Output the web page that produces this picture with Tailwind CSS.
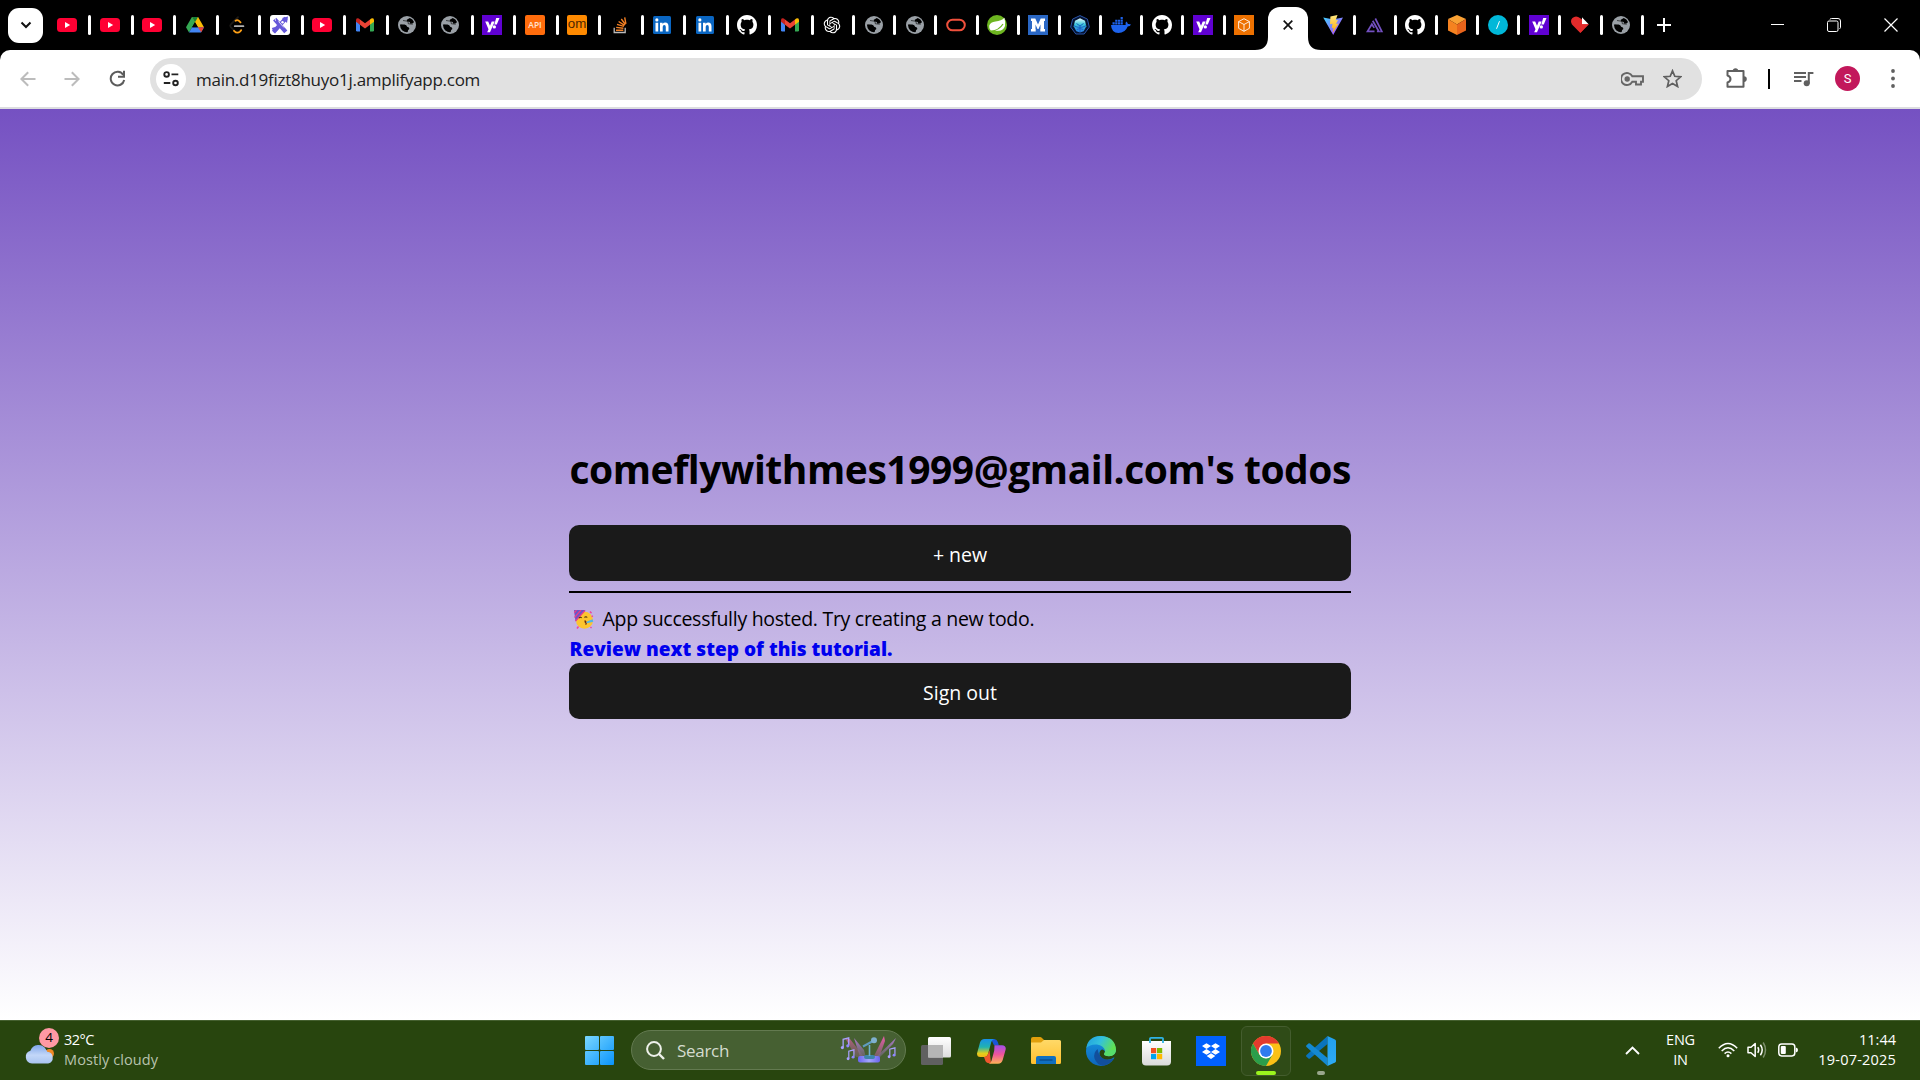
<!DOCTYPE html>
<html lang="en">
<head>
<meta charset="utf-8">
<title>Todos</title>
<script src="https://cdn.jsdelivr.net/npm/@tailwindcss/browser@4"></script>
</head>
<body class="flex h-[1080px] w-[1920px] flex-col overflow-hidden bg-black font-['Open_Sans','Noto_Sans',sans-serif] text-black">

<svg class="absolute size-0">
  <defs>
    <linearGradient id="viteA" x1="0" y1="0" x2="1" y2="1"><stop offset="0" stop-color="#41d1ff"/><stop offset="1" stop-color="#bd34fe"/></linearGradient>
    <linearGradient id="viteB" x1="0" y1="0" x2="0" y2="1"><stop offset="0" stop-color="#ffea83"/><stop offset="1" stop-color="#ffa800"/></linearGradient>
    <linearGradient id="winG" gradientUnits="userSpaceOnUse" x1="0" y1="0" x2="29" y2="29"><stop offset="0" stop-color="#7ad7ff"/><stop offset="1" stop-color="#0a94fb"/></linearGradient>
    <linearGradient id="cloudG" x1="0" y1="0" x2="0" y2="1"><stop offset="0" stop-color="#7fa6ea"/><stop offset=".55" stop-color="#c3d7f8"/><stop offset="1" stop-color="#a9c4f0"/></linearGradient>
    <linearGradient id="copA" x1="0" y1="0" x2="0" y2="1"><stop offset="0" stop-color="#1890e8"/><stop offset=".45" stop-color="#21b3b0"/><stop offset=".8" stop-color="#e3cf1b"/><stop offset="1" stop-color="#f4b31a"/></linearGradient>
    <linearGradient id="copB" x1="0" y1="0" x2="0" y2="1"><stop offset="0" stop-color="#a24fe8"/><stop offset=".5" stop-color="#f0559a"/><stop offset="1" stop-color="#ffb357"/></linearGradient>
    <linearGradient id="foldG" x1="0" y1="0" x2="0" y2="1"><stop offset="0" stop-color="#ffd968"/><stop offset="1" stop-color="#ffc02e"/></linearGradient>
    <linearGradient id="edgeA" x1="0" y1="0" x2="1" y2=".4"><stop offset="0" stop-color="#1f9de0"/><stop offset=".5" stop-color="#33c1dd"/><stop offset="1" stop-color="#62e24f"/></linearGradient>
    <linearGradient id="edgeB" x1="0" y1="0" x2="0" y2="1"><stop offset="0" stop-color="#1796e2"/><stop offset="1" stop-color="#0d66bb"/></linearGradient>
    <linearGradient id="storeG" x1="0" y1="0" x2="0" y2="1"><stop offset="0" stop-color="#fff"/><stop offset="1" stop-color="#dadada"/></linearGradient>
    <linearGradient id="vscG" x1="0" y1="0" x2="0" y2="1"><stop offset="0" stop-color="#22a0ee"/><stop offset="1" stop-color="#2eabf5"/></linearGradient>
    <linearGradient id="beamP" x1="0" y1="0" x2="0" y2="1"><stop offset="0" stop-color="#ef5cae"/><stop offset="1" stop-color="#a0658a" stop-opacity=".5"/></linearGradient>
    <linearGradient id="beamV" x1="0" y1="0" x2="0" y2="1"><stop offset="0" stop-color="#b07bd0"/><stop offset="1" stop-color="#7a6a80" stop-opacity=".5"/></linearGradient>
    <linearGradient id="discG" x1="0" y1="0" x2="1" y2="0"><stop offset="0" stop-color="#6a64ee"/><stop offset=".5" stop-color="#a3a5ff"/><stop offset="1" stop-color="#6a64ee"/></linearGradient>
    <linearGradient id="tvA" x1="0" y1="0" x2="0" y2="1"><stop offset="0" stop-color="#fff"/><stop offset="1" stop-color="#dedede"/></linearGradient>
    <linearGradient id="cncf" x1="0" y1="0" x2="0" y2="1"><stop offset="0" stop-color="#e8fbff"/><stop offset=".45" stop-color="#38c6d8"/><stop offset="1" stop-color="#2a78e4"/></linearGradient>

    <symbol id="youtube" viewBox="0 0 20 20"><rect y="3" width="20" height="14" rx="3.5" fill="#ff0033"/><path d="M8 7l5.2 3L8 13z" fill="#fff"/></symbol>
    <symbol id="drive" viewBox="0 0 20 20"><path d="M6.9 2h6.2L10 7.3 4 17.6 1 12.3z" fill="#34a853"/><path d="M13.1 2L19 12.3h-6.1L7 2z" fill="#fbbc04"/><path d="M4 17.6l3-5.3h12l-3 5.3z" fill="#4285f4"/><path d="M12.9 12.3H19l-2.8 5z" fill="#ea4335"/><path d="M6.9 2H13l-3 5.3z" fill="#188038"/><path d="M10 7.3l2.9 5H7.1z" fill="#000"/></symbol>
    <symbol id="leetcode" viewBox="0 0 20 20"><g fill="none" stroke-linecap="round" stroke-width="1.8"><path d="M11 2.2L3.8 9.3q-1.2 1.4 0 2.8l3 3" stroke="#1c1a17"/><path d="M8.6 5.7q1.6-1.3 3.4.2l1.5 1.5M7 15.800q3.200 3.300 6 .8l1.200-1.500" stroke="#ffa116"/><path d="M7.8 11.2h8.6" stroke="#b3b3b3"/></g></symbol>
    <symbol id="xcode" viewBox="0 0 20 20"><rect width="20" height="20" rx="3" fill="#fff"/><path d="M3.5 17.2L16 3.2M4.6 4.2l11.2 12.6" stroke="#6558d9" stroke-width="4.2"/><path d="M12 3l6-1.5L17 8zM1.8 13l3.4-1 2.5 3-3.5 3.2z" fill="#6558d9"/><path d="M8.5 6.5l5.5 6M4.8 2.2l.8 3.6" stroke="#fff" stroke-width=".8"/><circle cx="12.5" cy="7.3" r="1.2" fill="#fff"/></symbol>
    <symbol id="gmail" viewBox="0 0 20 20"><path d="M1 5v10.3q0 1.2 1.2 1.2H5V9.4z" fill="#4285f4"/><path d="M19 5v10.3q0 1.2-1.2 1.2H15V9.4z" fill="#34a853"/><path d="M15 4.5l1.2-.9Q19 2.4 19 5.2v1.6l-4 3z" fill="#fbbc04"/><path d="M5 4.4L10 8.2l5-3.8v5.4l-5 3.8-5-3.8z" fill="#ea4335"/><path d="M5 4.4L3.8 3.6Q1 2.4 1 5.2v1.6l4 3z" fill="#c5221f"/></symbol>
    <symbol id="globe" viewBox="0 0 20 20"><circle cx="10" cy="10" r="9" fill="#9aa0a6"/><path d="M12.800 3q3 1 4.200 4-.5 1.800-3.600 1.700-.2-2.200-2.600-2.200-1.400-.2-1-1.800zM2.900 9.600h4.600q2.200.3 2.600 2.200 2.400.2 2.300 2.300-1.600.4-1.700 3-3 .3-5.600-1.900Q3 12.800 2.900 9.600z" fill="#000"/><path d="M6 5.500l5 .8.300 2.500 4.500.4M4 10l4.500 1.200 2 2.200" fill="none" stroke="#000" stroke-width=".6"/></symbol>
    <symbol id="yahoo" viewBox="0 0 20 20"><rect width="20" height="20" fill="#6001d2"/><path d="M3.2 6.5h3L8 10.800l1.700-4.300h3L8 17.200H5.200l1.300-3zM14.200 3h3.300l-2.700 6.500h-2.500z" fill="#fff"/><circle cx="12.300" cy="11.900" r="1.700" fill="#fff"/></symbol>
    <symbol id="api" viewBox="0 0 20 20"><rect width="20" height="20" rx="2" fill="#ff6c0c"/><text x="10" y="13.200" text-anchor="middle" font-size="8.500" font-family="Open Sans" font-weight="600" fill="#ffe3d0">API</text></symbol>
    <symbol id="om" viewBox="0 0 20 20"><rect width="20" height="20" rx="2" fill="#ff8a00"/><text x="10" y="12.800" text-anchor="middle" font-size="12" font-family="Liberation Sans" fill="#4a2500" textLength="18.500" lengthAdjust="spacingAndGlyphs">om</text></symbol>
    <symbol id="stack" viewBox="0 0 20 20"><path d="M4.200 12.800v4.700h11v-4.700" fill="none" stroke="#bcbbbb" stroke-width="1.300"/><g stroke="#f48024" stroke-width="1.400"><path d="M6 15.200h7.300M6.200 12.400l7.200.9M7 9.400l6.900 2M8.600 6.500l6 3.900M11.300 4l4.100 5.500M14.700 2.400l1.200 6.400"/></g></symbol>
    <symbol id="linkedin" viewBox="0 0 20 20"><rect x="1" y="1" width="18" height="18" rx="1.500" fill="#0a66c2"/><path d="M3.500 7.800h2.700v8.600H3.500zM8 7.800h2.600V9q.9-1.400 2.700-1.400 3.200 0 3.200 3.800v5h-2.700v-4.500q0-2-1.500-2-1.600 0-1.600 2v4.500H8z" fill="#fff"/><circle cx="4.850" cy="4.900" r="1.600" fill="#fff"/></symbol>
    <symbol id="github" viewBox="0 0 16 16"><path fill="#fff" d="M8 0C3.580 0 0 3.580 0 8c0 3.540 2.290 6.530 5.470 7.590.4.070.55-.17.55-.38 0-.19-.01-.82-.01-1.490-2.010.37-2.530-.49-2.690-.94-.09-.23-.48-.94-.82-1.130-.28-.15-.68-.52-.01-.53.63-.01 1.080.58 1.230.82.72 1.210 1.870.87 2.330.66.07-.52.28-.87.51-1.070-1.780-.2-3.640-.89-3.640-3.950 0-.87.31-1.590.82-2.150-.08-.2-.36-1.020.08-2.120 0 0 .67-.21 2.200.82.64-.18 1.320-.27 2-.27.68 0 1.360.09 2 .27 1.530-1.040 2.200-.82 2.200-.82.44 1.100.16 1.920.08 2.120.51.56.82 1.270.82 2.150 0 3.070-1.870 3.750-3.650 3.950.29.25.54.73.54 1.480 0 1.070-.01 1.930-.01 2.200 0 .21.15.46.55.38A8.010 8.010 0 0 0 16 8c0-4.420-3.580-8-8-8z"/></symbol>
    <symbol id="openai" viewBox="-2.500 -2.500 29 29"><path fill="#fff" d="M22.2819 9.8211a5.9847 5.9847 0 0 0-.5157-4.9108 6.0462 6.0462 0 0 0-6.5098-2.9A6.0651 6.0651 0 0 0 4.9807 4.1818a5.9847 5.9847 0 0 0-3.9977 2.9 6.0462 6.0462 0 0 0 .7427 7.0966 5.98 5.98 0 0 0 .511 4.9107 6.051 6.051 0 0 0 6.5146 2.9001A5.9847 5.9847 0 0 0 13.2599 24a6.0557 6.0557 0 0 0 5.7718-4.2058 5.9894 5.9894 0 0 0 3.9977-2.9001 6.0557 6.0557 0 0 0-.7475-7.0729zm-9.022 12.6081a4.4755 4.4755 0 0 1-2.8764-1.0408l.1419-.0804 4.7783-2.7582a.7948.7948 0 0 0 .3927-.6813v-6.7369l2.02 1.1686a.071.071 0 0 1 .038.052v5.5826a4.504 4.504 0 0 1-4.4945 4.4944zm-9.6607-4.1254a4.4708 4.4708 0 0 1-.5346-3.0137l.142.0852 4.783 2.7582a.7712.7712 0 0 0 .7806 0l5.8428-3.3685v2.3324a.0804.0804 0 0 1-.0332.0615L9.74 19.9502a4.4992 4.4992 0 0 1-6.1408-1.6464zM2.3408 7.8956a4.485 4.485 0 0 1 2.3655-1.9728V11.6a.7664.7664 0 0 0 .3879.6765l5.8144 3.3543-2.0201 1.1685a.0757.0757 0 0 1-.071 0l-4.8303-2.7865A4.504 4.504 0 0 1 2.3408 7.872zm16.5963 3.8558L13.1038 8.364 15.1192 7.2a.0757.0757 0 0 1 .071 0l4.8303 2.7913a4.4944 4.4944 0 0 1-.6765 8.1042v-5.6772a.79.79 0 0 0-.407-.667zm2.0107-3.0231l-.142-.0852-4.7735-2.7818a.7759.7759 0 0 0-.7854 0L9.409 9.2297V6.8974a.0662.0662 0 0 1 .0284-.0615l4.8303-2.7866a4.4992 4.4992 0 0 1 6.6802 4.66zM8.3065 12.863l-2.02-1.1638a.0804.0804 0 0 1-.038-.0567V6.0742a4.4992 4.4992 0 0 1 7.3757-3.4537l-.142.0805L8.704 5.459a.7948.7948 0 0 0-.3927.6813zm1.0976-2.3654l2.602-1.4998 2.6069 1.4998v2.9994l-2.5974 1.4997-2.6067-1.4997Z"/></symbol>
    <symbol id="oracle" viewBox="0 0 20 20"><rect x="1.200" y="4.700" width="17.600" height="10.600" rx="5.300" fill="none" stroke="#f0503c" stroke-width="2"/></symbol>
    <symbol id="spring" viewBox="0 0 20 20"><circle cx="10" cy="10" r="10" fill="#6db520"/><path d="M17.400 2.800q1.300 5 .6 8.200-1.500 4.700-6.500 4.800-3.500.2-7.200.1Q1.800 14 2.300 10.500 3.400 6.800 8.500 6.400q6-.2 8.900-3.600z" fill="#fff"/><path d="M4 16.200q8-.8 12-7.200" stroke="#6db520" stroke-width="1.200" fill="none"/></symbol>
    <symbol id="mdb" viewBox="0 0 20 20"><rect width="20" height="20" fill="#2a67c4"/><path d="M3 16.500V14h1V6H3V3.500h4.300l2.700 6 2.700-6H17V6h-1v8h1v2.500h-4.700V14h.2V9.500l-2 4.500H9.500l-2-4.500V14h.2v2.500z" fill="#fff"/></symbol>
    <symbol id="kube" viewBox="0 0 20 20"><path d="M10 .6l7.400 3.500 1.900 8-5.100 6.900H5.800L.7 12.100l1.900-8z" fill="#041230" stroke="#2b55a8" stroke-width="1"/><path d="M10 3.200l5 2.600 1.300 5.400-2.600 5-3.700 1.300-3.700-1.300-2.600-5L5 5.800z" fill="url(#cncf)"/><path d="M3.900 10.700q6 3.500 12.200 0M10 10v7M6.800 14.500q3.200-2 6.400 0M6.500 8.500l3.500 2.500 3.500-2.500" fill="none" stroke="#1c5fc4" stroke-width="1"/></symbol>
    <symbol id="docker" viewBox="0 0 20 20"><path d="M0 10h14.700q-.6-2 .6-3.400 1.500 1 1.600 2.500 1.600-.3 3.100.4-.9 1.900-3.300 1.900-2.500 6.500-9.300 6.500Q.4 17.900 0 10z" fill="#1d63ed"/><g fill="#1d63ed"><path d="M1.500 7.300h2.200v2.100H1.500zM4.200 7.300h2.200v2.100H4.200zM6.900 7.300h2.200v2.100H6.900zM9.600 7.300h2.200v2.100H9.600zM4.200 4.700h2.200v2.100H4.200zM6.900 4.700h2.200v2.100H6.900zM9.600 4.700h2.200v2.100H9.600zM9.600 2.100h2.200v2.100H9.600z"/></g></symbol>
    <symbol id="awsbox" viewBox="0 0 20 20"><rect width="20" height="20" fill="#ed7100"/><path d="M10 3.700l5.400 2.900v6.700L10 16.300l-5.400-3V6.600zM4.600 6.600L10 9.500l5.400-2.900M10 9.500v6.800" fill="none" stroke="#fff" stroke-width="1" opacity=".85"/></symbol>
    <symbol id="vite" viewBox="0 0 20 20"><path d="M.2 2.500L10.200 20 20 2.500 12 4H8z" fill="url(#viteA)"/><path d="M14.500 0L7.400 1.400 7 9.300l2.500-.5-.7 4.500 1.800-.5-1 5 6-9.200-2.600.5 2-4.100-2.300.3z" fill="url(#viteB)"/></symbol>
    <symbol id="amplify" viewBox="0 0 20 20"><g fill="none" stroke="#7350c0" stroke-width="1.700"><path d="M10.500 16.400H3.500l4.400-7.200 2.300 3.700"/><path d="M8.700 5.800l6.200 10.700h-2"/><path d="M11.300 3.500l6.500 12.900h-1.600"/></g></symbol>
    <symbol id="cube" viewBox="0 0 20 20"><path d="M10 0l9 4-9 5.500L1 4z" fill="#f9a134"/><path d="M1 4l9 5.500V20l-9-4.500z" fill="#f58220"/><path d="M19 4l-9 5.500V20l9-4.500z" fill="#e8641b"/></symbol>
    <symbol id="slash" viewBox="0 0 20 20"><circle cx="10" cy="10" r="10" fill="#00b8d9"/><path d="M8.500 13.800l3-7.600" stroke="#fff" stroke-width="1"/></symbol>
    <symbol id="heart" viewBox="0 0 20 20"><path d="M10.300 18L2 9.500Q-.2 5.500 2.400 3 6-.3 10.300 3.200L12 4.500V9h6.500z" fill="#e32b2b"/><path d="M12 2.200l6.600 7H12z" fill="#fff"/><path d="M11 9.200h8L10.300 18z" fill="#e32b2b"/></symbol>

    <symbol id="note" viewBox="0 0 10 14"><path d="M3 11V2.500l6-1.500v8" fill="none" stroke="#a9a0ff" stroke-width="1.400"/><circle cx="2.200" cy="11.400" r="1.700" fill="#a9a0ff"/><circle cx="8" cy="9.500" r="1.700" fill="#8f86ff"/></symbol>
  </defs>
</svg>

<!-- Tab strip -->
<header class="flex h-[50px] shrink-0 items-end">
  <div class="flex h-full w-[48.8px] shrink-0 items-center pl-2">
    <button class="flex size-[35px] items-center justify-center rounded-[11px] bg-white">
      <svg class="size-[12px]" viewBox="0 0 12 12"><path d="M1.500 3.500L6 8l4.500-4.500" fill="none" stroke="#111" stroke-width="2"/></svg>
    </button>
  </div>
  <div id="tabsA" class="flex h-full shrink-0"></div>
  <div class="relative ml-[13.500px] flex h-[43px] w-[40px] shrink-0 items-center justify-center rounded-t-[12px] bg-white pb-[7px]">
    <svg class="absolute bottom-0 -left-[13px] size-[13px]" viewBox="0 0 13 13"><path d="M13 0v13H0Q13 13 13 0z" fill="#fff"/></svg>
    <svg class="absolute -right-[13px] bottom-0 size-[13px]" viewBox="0 0 13 13"><path d="M0 0v13h13Q0 13 0 0z" fill="#fff"/></svg>
    <svg class="size-[10px]" viewBox="0 0 10 10"><path d="M.7.7l8.600 8.600M9.300.7L.7 9.300" stroke="#111" stroke-width="1.700"/></svg>
  </div>
  <div id="tabsB" class="ml-[6.500px] flex h-full shrink-0"></div>
  <div class="flex h-full w-[41px] shrink-0 items-center justify-center">
    <svg class="size-[14px]" viewBox="0 0 14 14"><path d="M7 0v14M0 7h14" stroke="#fff" stroke-width="2"/></svg>
  </div>
  <div class="ml-auto flex h-full w-[171px] shrink-0 items-center">
    <div class="flex w-[57px] justify-center"><svg class="h-[14px] w-[14px]" viewBox="0 0 14 14"><path d="M0 6.500h13" stroke="#fff"/></svg></div>
    <div class="flex w-[57px] justify-center pr-[2px]"><svg class="size-[14px]" viewBox="0 0 14 14" fill="none" stroke="#fff"><rect x=".5" y="3" width="10.500" height="10.500" rx="1.500"/><path d="M3 1.500Q3 .5 4.500.5H11q2.500 0 2.500 2.500v6.500q0 1-1 1"/></svg></div>
    <div class="flex w-[57px] justify-center pr-[1px]"><svg class="size-[14px]" viewBox="0 0 14 14"><path d="M.5.5l13 13M13.500.5l-13 13" stroke="#fff" stroke-width="1.200"/></svg></div>
  </div>
</header>

<!-- Toolbar -->
<nav class="flex h-[57px] shrink-0 items-center rounded-t-[10px] bg-white">
  <div class="flex w-[150px] items-center pl-[20px]">
    <svg class="size-[16px]" viewBox="0 0 16 16"><path d="M15.500 8H1.800M8.200 1.200L1.400 8l6.800 6.800" fill="none" stroke="#bcbcbc" stroke-width="2"/></svg>
    <svg class="ml-[28px] size-[16px]" viewBox="0 0 16 16"><path d="M.5 8h13.700M7.800 1.200L14.600 8l-6.800 6.800" fill="none" stroke="#bcbcbc" stroke-width="2"/></svg>
    <svg class="ml-[29px] size-[17px]" viewBox="0 0 17 17"><path d="M14.300 5A6.800 6.800 0 1 0 15.200 10" fill="none" stroke="#5c5c5c" stroke-width="2"/><path d="M15 .8v6H9" fill="none" stroke="#5c5c5c" stroke-width="2"/></svg>
  </div>
  <div class="flex h-[42px] w-[1552px] items-center rounded-full bg-[#e1e1e1] pr-[20px] pl-[6px]">
    <div class="flex size-[30px] items-center justify-center rounded-full bg-white">
      <svg class="size-[16px]" viewBox="0 0 16 16" fill="none" stroke="#222" stroke-width="1.900"><circle cx="3.600" cy="3.400" r="2.300"/><path d="M8.500 3.400h6.800M.8 12h6.500"/><circle cx="12.500" cy="12" r="2.300"/></svg>
    </div>
    <span class="ml-[10px] pt-[2px] text-[17px] tracking-[-0.270px] text-[#222]">main.d19fizt8huyo1j.amplifyapp.com</span>
    <svg class="ml-auto h-[14px] w-[23px]" viewBox="0 0 23 14"><path d="M11.300 4.200A6 6 0 1 0 11.300 9.800H15v2.700h5V9.800h2V4.200z" fill="none" stroke="#666" stroke-width="1.900"/><circle cx="6.200" cy="7" r="2.700" fill="#666"/></svg>
    <svg class="ml-[19px] size-[19px]" viewBox="0 0 19 19"><path d="M9.500 1.800l2.300 5.500 5.900.5-4.500 3.900 1.400 5.800-5.100-3.100-5.100 3.100 1.400-5.800-4.500-3.900 5.900-.5z" fill="none" stroke="#5f5f5f" stroke-width="1.700"/></svg>
  </div>
  <div class="flex flex-1 items-center pl-[24px]">
    <svg class="h-[21px] w-[22px]" viewBox="0 0 22 21"><path d="M1.500 3h16v15.800h-16v-4.300q3-1 3-3.500t-3-3.500z" fill="none" stroke="#606060" stroke-width="2" stroke-linejoin="round"/><path d="M6.800 3a2.700 2.700 0 0 1 5.400 0zM18 8.300a2.800 2.800 0 0 1 0 5.600z" fill="#606060"/></svg>
    <div class="ml-[20px] h-[20px] w-[2px] bg-black"></div>
    <svg class="ml-[24px] h-[16px] w-[20px]" viewBox="0 0 20 16"><path d="M0 2h12M0 6h12M0 10h7.500" stroke="#606060" stroke-width="2"/><circle cx="12.700" cy="12.200" r="3" fill="#606060"/><path d="M14.800 12.500V2.100h4.600" fill="none" stroke="#606060" stroke-width="2"/></svg>
    <div class="ml-[21px] flex size-[25px] items-center justify-center rounded-full bg-[#c2185b] font-[Roboto] text-[13px] text-white">S</div>
    <svg class="ml-[30.500px] h-[19px] w-[4px]" viewBox="0 0 4 19" fill="#606060"><circle cx="2" cy="2" r="1.900"/><circle cx="2" cy="9.500" r="1.900"/><circle cx="2" cy="17" r="1.900"/></svg>
  </div>
</nav>
<div class="h-[2px] shrink-0 bg-[#dcdde0]"></div>

<!-- Page -->
<main class="flex h-[911px] shrink-0 flex-col items-center bg-linear-to-b/srgb from-[#7551c2] to-white pt-[332px]">
  <div class="flex w-[782px] flex-col">
    <h1 class="h-[84px] text-[39px] leading-[56px] font-bold tracking-[-0.460px] whitespace-nowrap pl-[0.500px]">comeflywithmes1999@gmail.com's todos</h1>
    <button class="h-[56px] rounded-[10px] bg-[#1a1a1a] pt-[3px] text-[19.500px] text-white">+ new</button>
    <div class="my-[10px] h-[2px] bg-black"></div>
    <div class="flex h-[30px] items-center pt-[2px] pl-[5px]">
      <svg class="mt-[1px] size-[20px]" viewBox="0 0 20 20"><circle cx="10.500" cy="10.300" r="8.500" fill="#fcc52f"/><path d="M0 0h11.500L1.500 11.500z" fill="#6a55c8"/><path d="M2.500 0L0 3M7 0L.5 7.500M11 .5L1.500 11" stroke="#e83f8a" stroke-width="1.200"/><path d="M5 8q1.500-1.500 2.700 0M10.500 7.500q1.500-1.500 2.700 0" fill="none" stroke="#4a3010" stroke-width="1.200"/><path d="M10.500 11q2 .3 1 1.500 1.500.8 0 2" fill="none" stroke="#6b2a10" stroke-width="1.300"/><path d="M12.500 11.800l6-2.500.8 2.500-6.500 1.500z" fill="#4db6e8"/><path d="M16 1.500l1.500 1.800M17.500 6.500l1.500-.5M3 18.500l1.500-2M16.500 18l1-1" stroke="#f0479a" stroke-width="1.500"/></svg>
      <span class="ml-[8.500px] text-[19.500px] tracking-[-0.280px] whitespace-nowrap">App successfully hosted. Try creating a new todo.</span>
    </div>
    <a class="block h-[30px] pt-[1px] pl-[0.500px] text-[19px] leading-[30px] font-extrabold tracking-[0.030px] whitespace-nowrap text-[#0000ee]">Review next step of this tutorial.</a>
    <button class="h-[56px] rounded-[10px] bg-[#1a1a1a] pt-[3px] text-[19.500px] text-white">Sign out</button>
  </div>
</main>

<!-- Taskbar -->
<footer class="flex h-[60px] shrink-0 items-center border-t border-[#45602f] bg-[#28450e] text-white">
  <div class="flex w-[572px] items-center pl-[24px]">
    <div class="relative h-[40px] w-[34px]">
      <div class="absolute top-[18px] left-[21px] size-[9px] rounded-full bg-[#f08a24]"></div>
      <svg class="absolute top-[13px] left-0 h-[20px] w-[32px]" viewBox="0 0 32 20"><path d="M8 19.500a6.500 6.500 0 0 1-1.600-12.700A8.500 8.500 0 0 1 22 5.500q1 1.300 1.200 2.200a6 6 0 0 1 1 11.800z" fill="url(#cloudG)"/></svg>
      <div class="absolute -top-[3px] left-[15px] flex size-[20px] items-center justify-center rounded-full bg-[#ff99a4] text-[13.500px] leading-none text-black">4</div>
    </div>
    <div class="ml-[6px] pb-[2px] text-[14.500px] leading-[20px]">
      <p class="tracking-[-0.500px]">32°C</p>
      <p class="tracking-[0.100px] text-[#b8c3af]">Mostly cloudy</p>
    </div>
  </div>
  <div class="flex w-[59px] pl-[13px]">
    <svg class="size-[29px]" viewBox="0 0 29 29" fill="url(#winG)"><rect width="14" height="14" rx="1"/><rect x="15" width="14" height="14" rx="1"/><rect y="15" width="14" height="14" rx="1"/><rect x="15" y="15" width="14" height="14" rx="1"/></svg>
  </div>
  <div class="mb-[1px] flex h-[40px] w-[275px] items-center rounded-full border border-[#637a50] bg-[#466032] pl-[14px]">
    <svg class="size-[19px]" viewBox="0 0 19 19"><circle cx="8" cy="8" r="6.900" fill="none" stroke="#eef1ea" stroke-width="2"/><path d="M13 13l5 5" stroke="#eef1ea" stroke-width="2.400"/></svg>
    <span class="ml-[12px] pt-[1px] text-[17px] tracking-[-0.300px] text-[#d5dccf]">Search</span>
    <div class="relative ml-auto mr-[8px] h-[30px] w-[57px]">
      <svg class="size-full" viewBox="0 0 57 30"><path d="M5 3l5 1 14 18h-8z" fill="url(#beamP)" opacity=".65"/><path d="M14 3l10 12 2 8-6-1z" fill="url(#beamV)"/><path d="M44 1l1 5-6 17h-6z" fill="url(#beamP)"/><path d="M56 3l-3 6-14 14h-4z" fill="url(#beamV)"/><rect x="18" y="21" width="22" height="6.500" rx="2" fill="url(#discG)"/><rect x="24" y="20" width="11" height="4" rx="2" fill="#3f86a8"/><path d="M29.500 21V10" stroke="#6fb0cf" stroke-width="1.600"/><path d="M23 11.500l10-5.500" stroke="#5f9cc0" stroke-width="2"/><circle cx="34" cy="5.200" r="3" fill="#7fb0d0"/><use href="#note" x="0" y="2" width="10" height="13"/><use href="#note" x="6" y="14" width="9" height="12"/><use href="#note" x="47" y="12" width="9" height="12"/></svg>
    </div>
  </div>
  <div class="ml-[2.500px] flex items-center">
    <div class="flex w-[55px] justify-center"><svg class="h-[28px] w-[30px]" viewBox="0 0 30 28"><rect y="8" width="22" height="20" rx="1.500" fill="#606060"/><rect x="7" y="0" width="23" height="20.500" rx="1.500" fill="url(#tvA)"/><path d="M7 8h15v12.500H7z" fill="#b5b5b5"/></svg></div>
    <div class="flex w-[55px] justify-center"><svg class="h-[26px] w-[29px]" viewBox="0 0 29 26"><path d="M14 1h3.500q2.500.4 3.300 3l1 3.300H17z" fill="#1a55d8"/><path d="M7.500 1h9.700q-2.200.6-2.900 3L11 16q-.9 3-3.500 3H3.300Q0 19-.0 15.500L3 4.500Q4 1 7.500 1z" fill="url(#copA)"/><path d="M7 19q3 0 4-3l1.500-4 1.500 13q-4 .8-5.500-1.700z" fill="#f0562d"/><path d="M17.500 7.200H25q4.500.3 3.600 4.500L25.700 22q-1 3.700-4.700 3.700h-9.200q2-.6 2.700-3l2.700-10z" fill="url(#copB)"/></svg></div>
    <div class="flex w-[55px] justify-center"><svg class="h-[28px] w-[30px]" viewBox="0 0 30 28"><path d="M0 2q0-2 2-2h7q1.200 0 2 .9L13 3v4H0z" fill="#e09f0c"/><path d="M0 5.500h10L13 3h15.500q1.500 0 1.500 1.500v21q0 1.500-1.500 1.500h-27Q0 27 0 25.500z" fill="url(#foldG)"/><path d="M5 27v-6q0-2 2-2h16q2 0 2 2v6z" fill="#1070c0"/><path d="M8.500 23h13" stroke="#0a4a88" stroke-width="1.300"/></svg></div>
    <div class="flex w-[55px] justify-center"><svg class="size-[30px]" viewBox="0 0 30 30"><circle cx="15" cy="15" r="15" fill="url(#edgeB)"/><path d="M.3 12Q2 .3 15 0q14 .8 15 13.500 0 6.500-7 6.700-4.800-.2-5-2.200 1.500-1.300 1-3.700Q17.500 9.500 11 8.500 4 8 .3 12z" fill="url(#edgeA)"/><path d="M11.500 13Q7 17 8.500 22.500 11 29 17 29.800q7-1 10.700-7.300-2 1.200-6 1.200-9-1-10.200-10.700z" fill="#124f9c"/><path d="M30 15q-.8 5-7 5.200-4.800-.2-5-2.200 1-1 .8-2.800-1.500-2-3.300-1.500-3 2-1.500 5.800 2.500 4 7.500 4 4-.2 6.200-2l2.300.5z" fill="#28450e"/><path d="M30 13q0 7-7 7.200-4.800-.2-5-2.200l1-2z" fill="#56dd6c"/></svg></div>
    <div class="flex w-[55px] justify-center"><svg class="h-[30px] w-[29px]" viewBox="0 0 29 30"><path d="M8 7V2.500Q8 1.800 9 1.800h11q1 0 1 .8V7" fill="none" stroke="#2fb4e6" stroke-width="1.800"/><path d="M0 5h29v20.500q0 4-4 4H4q-4 0-4-4z" fill="url(#storeG)"/><path d="M8 5v2M21 5v2" stroke="#2fb4e6" stroke-width="1.800"/><rect x="9" y="12" width="5.200" height="5.200" fill="#f25022"/><rect x="15" y="12" width="5.200" height="5.200" fill="#7fba00"/><rect x="9" y="18" width="5.200" height="5.200" fill="#00a4ef"/><rect x="15" y="18" width="5.200" height="5.200" fill="#ffb900"/></svg></div>
    <div class="flex w-[55px] justify-center"><svg class="size-[30px]" viewBox="0 0 30 30"><rect width="30" height="30" fill="#0061fe"/><path d="M10.500 7.200l4.500 2.900-4.500 2.900L6 10.100zM19.500 7.200l4.500 2.900-4.500 2.900-4.500-2.900zM10.500 13l4.500 2.900-4.500 2.900L6 15.900zM19.500 13l4.500 2.900-4.500 2.900-4.500-2.900zM15 17.300l4.300 2.800-4.300 2.800-4.300-2.800z" fill="#fff"/></svg></div>
    <div class="flex w-[55px] justify-center">
      <div class="relative flex size-[50px] items-center justify-center rounded-[6px] border border-[#445d2e] bg-[#38522181]">
        <svg class="size-[30px]" viewBox="0 0 30 30"><circle cx="15" cy="15" r="15" fill="#fbc116"/><path d="M15 7.500h13A15 15 0 0 0 2 7.500L8.500 18.800z" fill="#e33b2e"/><path d="M2 7.500A15 15 0 0 0 15 30l6.500-11.300L15 22.500l-6.500-3.700z" fill="#2b9e4b"/><circle cx="15" cy="15" r="7.500" fill="#fff"/><circle cx="15" cy="15" r="5.900" fill="#2f7bee"/></svg>
        <div class="absolute bottom-0 left-[14px] h-[4px] w-[20px] rounded-full bg-[#9bf51d]"></div>
      </div>
    </div>
    <div class="flex w-[55px] justify-center">
      <div class="relative flex size-[50px] items-center justify-center">
        <svg class="size-[30px]" viewBox="0 0 30 30"><path d="M21.500 0v8L4 22.500q-.8.600-1.600 0L.5 20.800q-.8-.8 0-1.700z" fill="#0a74bd"/><path d="M21.500 30v-8L4 7.500q-.8-.6-1.600 0L.5 9.200q-.8.8 0 1.700z" fill="#1489d1"/><path d="M21.500 0L29 3.500q1 .5 1 1.600v19.800q0 1.100-1 1.600L21.500 30z" fill="url(#vscG)"/></svg>
        <div class="absolute bottom-[1px] left-[21px] h-[4px] w-[8px] rounded-full bg-[#9aa78d]"></div>
      </div>
    </div>
  </div>
  <div class="ml-auto flex items-center pr-[24px] pb-[1px] text-[14.500px] leading-[20px]">
    <svg class="h-[9px] w-[15px]" viewBox="0 0 15 9"><path d="M1 8l6.500-6.500L14 8" fill="none" stroke="#fff" stroke-width="1.900"/></svg>
    <div class="ml-[20.500px] w-[40px] text-center tracking-[-0.200px]"><p>ENG</p><p>IN</p></div>
    <svg class="ml-[17px] h-[16px] w-[20px]" viewBox="0 0 20 16" fill="none" stroke="#fff" stroke-width="1.500"><path d="M.8 6.200q9.200-9.600 18.400 0M3.700 9q6.300-6.400 12.600 0M6.600 11.600q3.400-3.200 6.800 0"/><circle cx="10" cy="13.700" r="1.500" fill="#fff" stroke="none"/></svg>
    <svg class="ml-[9.500px] h-[18px] w-[21px]" viewBox="0 0 21 18" fill="none" stroke="#fff" stroke-width="1.500"><path d="M1 6.300h3L8.200 2.500v13L4 11.700H1z" stroke-linejoin="round"/><path d="M10.800 6.200q1.800 2.800 0 5.600M13.400 3.800q3.600 5.200 0 10.400"/><path d="M16.200 1.500q4.600 7.500 0 15" stroke="#7d8f6c"/></svg>
    <svg class="ml-[10px] h-[14px] w-[20px]" viewBox="0 0 20 14"><rect x=".8" y=".9" width="16" height="12" rx="2.800" fill="none" stroke="#fff" stroke-width="1.500"/><rect x="2.800" y="3" width="5" height="8" rx="1" fill="#fff"/><path d="M17.800 4.500q2.200.3 2.200 2.500t-2.200 2.500z" fill="#fff"/></svg>
    <div class="ml-[16px] w-[82px] pb-[1px] text-right whitespace-nowrap"><p>11:44</p><p class="tracking-[0.200px]">19-07-2025</p></div>
  </div>
</footer>

<script>
  const wide = 'flex w-[42.500px] items-center justify-between pl-[8.700px]';
  const narrow = 'flex w-[41.200px] items-center justify-between pl-[8.700px]';
  const tab = (name, cls) => `<div class="${cls}"><svg class="size-[20px]"><use href="#${name}"/></svg><span class="h-[20px] w-[3px] rounded-full bg-white"></span></div>`;
  const row = (names, cls) => names.split(' ').map(n => tab(n, cls)).join('');
  document.getElementById('tabsA').innerHTML =
    row('youtube youtube youtube drive leetcode xcode youtube gmail globe globe yahoo api om stack linkedin linkedin github gmail', wide) +
    row('openai globe globe oracle spring mdb kube docker github yahoo', narrow) +
    '<div class="flex items-center pl-[8.700px]"><svg class="size-[20px]"><use href="#awsbox"/></svg></div>';
  document.getElementById('tabsB').innerHTML = row('vite amplify github cube slash yahoo heart globe', narrow);
</script>
</body>
</html>
